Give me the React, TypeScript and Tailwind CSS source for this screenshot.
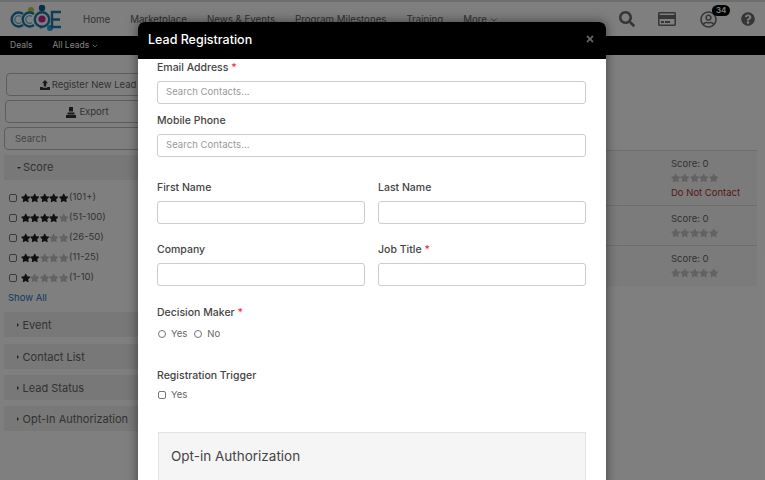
import { FaSearch, FaRegCreditCard, FaRegUserCircle, FaQuestionCircle, FaStar, FaTimes } from "react-icons/fa"
import { ChevronDown } from "lucide-react"

const navItems = ["Home", "Marketplace", "News & Events", "Program Milestones", "Training"]
const scoreRows = [
  { filled: 5, label: "(101+)" },
  { filled: 4, label: "(51-100)" },
  { filled: 3, label: "(26-50)" },
  { filled: 2, label: "(11-25)" },
  { filled: 1, label: "(1-10)" },
]
const filters = ["Event", "Contact List", "Lead Status", "Opt-In Authorization"]

function Stars({ filled }: { filled: number }) {
  return (
    <span className="flex w-[47px] justify-between">
      {[0, 1, 2, 3, 4].map((i) => (
        <FaStar key={i} size={10} className={i < filled ? "text-[#222]" : "text-[#c4c4c4]"} />
      ))}
    </span>
  )
}

function Logo() {
  return (
    <svg width="54" height="34" viewBox="0 0 54 34" fill="none">
      <circle cx="21" cy="8" r="3" fill="#c9c63a" />
      <circle cx="32" cy="6" r="3.2" fill="#0f5f8c" />
      <circle cx="32" cy="17" r="3.6" fill="#c2278f" />
      <circle cx="31" cy="25" r="1.5" fill="#8a6a3a" />
      <circle cx="40" cy="26" r="3" fill="#2aa3d6" />
      <path d="M13 12a7 7 0 1 0 0 11" stroke="#1b7fa8" strokeWidth="2.4" />
      <path d="M11 14.500a3.800 3.800 0 1 0 0 6" stroke="#56b7dc" strokeWidth="1.200" />
      <path d="M24 12a7 7 0 1 0 0 11" stroke="#1b7fa8" strokeWidth="2.400" />
      <path d="M22 14.500a3.800 3.800 0 1 0 0 6" stroke="#56b7dc" strokeWidth="1.200" />
      <circle cx="32" cy="17.500" r="7.200" stroke="#1b7fa8" strokeWidth="2.400" />
      <path d="M51 10H42V25H51M42 17.500H50" stroke="#1b7fa8" strokeWidth="2.400" />
    </svg>
  )
}

function UploadIcon() {
  return (
    <svg width="10" height="10" viewBox="0 0 10 10" fill="#333" className="mr-[2px]">
      <path d="M5 0 8 3.200H6.200V6.400H3.800V3.200H2Z" />
      <path d="M0 7H2.800V7.800H7.200V7H10V10H0Z" />
    </svg>
  )
}

function ExportIcon() {
  return (
    <svg width="10" height="11" viewBox="0 0 10 11" fill="#333" className="mr-[3px]">
      <path d="M3 0H7V4.500H3Z" />
      <path d="M1.500 5.500H8.500V7.500H1.500Z" />
      <path d="M0 8H10V11H0Z" />
    </svg>
  )
}

function Caret({ open }: { open?: boolean }) {
  return open ? (
    <span className="mr-[2px] h-0 w-0 border-x-[2px] border-t-[2.5px] border-x-transparent border-t-[#444]" />
  ) : (
    <span className="mr-[3.500px] h-0 w-0 border-y-[2px] border-l-[2.5px] border-y-transparent border-l-[#444]" />
  )
}

function LeadScore({ dnc }: { dnc?: boolean }) {
  return (
    <>
      <div className="leading-[14px]">Score: 0</div>
      <div className="mt-[2px]">
        <Stars filled={0} />
      </div>
      {dnc && <div className="mt-[3px] leading-[14px] text-[#a33]">Do Not Contact</div>}
    </>
  )
}

function Background() {
  return (
    <div className="flex h-full flex-col bg-white text-[#666]">
      {/* Top nav */}
      <div className="flex h-9 items-center border-t-2 border-[#ddd] pl-2.5">
        <Logo />
        <div className="ml-[19px] mt-0.5 flex gap-[20px] text-[9.700px]">
          {navItems.map((n) => (
            <span key={n}>{n}</span>
          ))}
          <span className="flex items-center gap-0.5">
            More <ChevronDown size={10} />
          </span>
        </div>
        <div className="ml-auto flex items-center text-[#6c6c6c]">
          <FaSearch size={16} className="mr-[23px]" />
          <FaRegCreditCard size={18} className="mr-[24px]" />
          <span className="relative mr-[24px]">
            <FaRegUserCircle size={17} />
            <span className="absolute -top-[6px] left-[12px] rounded-full bg-black px-1 text-[8px] font-semibold leading-[11px] text-white">
              34
            </span>
          </span>
          <FaQuestionCircle size={14} className="mr-[10px]" />
        </div>
      </div>

      {/* Sub nav */}
      <div className="flex h-[19px] items-center gap-[20px] bg-black pl-2.5 text-[8.5px] text-white">
        <span>Deals</span>
        <span className="flex items-center gap-0.5">
          All Leads <ChevronDown size={8} />
        </span>
      </div>

      <div className="flex flex-1">
        {/* Sidebar */}
        <div className="w-[170px] pl-1 pt-[18px] text-[10px]">
          <div className="ml-0.5 flex h-[23px] items-center justify-center rounded border border-[#bbb] pt-px text-[9.500px]">
            <UploadIcon />
            Register New Lead
          </div>
          <div className="ml-px mt-1 flex h-[23px] items-center justify-center rounded border border-[#bbb] pt-0.5 text-[9.500px]">
            <ExportIcon />
            Export
          </div>
          <div className="mt-1 flex h-[23px] items-center rounded border border-[#bbb] pl-2.5 pt-px text-[9.500px] text-[#888]">
            Search
          </div>
          <div className="mt-[5px] flex h-[25px] items-center bg-[#f0f0f0] pl-[13px] text-[11px]">
            <Caret open />
            Score
          </div>
          <div className="mt-[10px] flex flex-col gap-[5px] pl-[5px] text-[9.500px]">
            {scoreRows.map((r) => (
              <div key={r.label} className="flex h-[15px] items-center">
                <span className="mr-[4px] h-[8px] w-[8px] rounded-[2px] border border-[#777] bg-white" />
                <Stars filled={r.filled} />
                <span className="ml-px">{r.label}</span>
              </div>
            ))}
          </div>
          <div className="mt-[6px] pl-1 text-[9.500px] text-[#2a72b5]">Show All</div>
          <div className="mt-[7px] flex flex-col gap-[6px]">
            {filters.map((f) => (
              <div key={f} className="flex h-[25px] items-center bg-[#f0f0f0] pl-[13px] text-[11px] first:mb-px">
                <Caret />
                {f}
              </div>
            ))}
          </div>
        </div>

        {/* Lead list */}
        <div className="ml-auto mr-2 mt-[95px] h-[136px] w-[300px] bg-[#f7f7f7] text-[9.500px]">
          <div className="h-[55px] border-t border-[#ddd] pl-[214px] pt-[6px]">
            <LeadScore dnc />
          </div>
          <div className="h-[40px] border-t border-[#ddd] pl-[214px] pt-[6px]">
            <LeadScore />
          </div>
          <div className="h-[40px] border-t border-[#ddd] pl-[214px] pt-[6px]">
            <LeadScore />
          </div>
        </div>
      </div>
    </div>
  )
}

function Field({ label, required, placeholder }: { label: string; required?: boolean; placeholder?: string }) {
  return (
    <div>
      <label className="block text-[10.500px] font-medium leading-[14px] text-[#444]">
        {label} {required && <span className="text-red-500">*</span>}
      </label>
      <div className="mt-[6px] flex h-[23px] items-center rounded-[3px] border border-[#ccc] pl-2 text-[9.500px] tracking-[0.05px] text-[#999]">
        {placeholder}
      </div>
    </div>
  )
}

function Modal() {
  return (
    <div className="absolute left-[138px] top-[22px] h-[470px] w-[468px] overflow-hidden rounded-t-md bg-white shadow-[0_0_12px_rgba(0,0,0,0.5)]">
      <div className="flex h-[37px] items-center justify-between bg-black pl-[10px] pr-[11px] text-white">
        <span className="text-[12.500px] font-medium">Lead Registration</span>
        <FaTimes size={10} className="-mt-1 text-[#666]" />
      </div>
      <div className="pl-[19px] pr-[20px] pt-[2px]">
        <Field label="Email Address" required placeholder="Search Contacts..." />
        <div className="mt-[10px]">
          <Field label="Mobile Phone" placeholder="Search Contacts..." />
        </div>
        <div className="mt-[24px] grid grid-cols-2 gap-x-[13px] gap-y-[19px]">
          <Field label="First Name" />
          <Field label="Last Name" />
          <Field label="Company" />
          <Field label="Job Title" required />
        </div>
        <div className="mt-[20px] text-[10.500px] font-medium leading-[14px] text-[#444]">
          Decision Maker <span className="text-red-500">*</span>
        </div>
        <div className="mt-[7px] flex items-center pl-px text-[9.500px] leading-[14px] text-[#666]">
          <span className="h-2 w-2 rounded-full border border-[#777]" />
          <span className="ml-[5px]">Yes</span>
          <span className="ml-[7px] h-2 w-2 rounded-full border border-[#777]" />
          <span className="ml-[5px]">No</span>
        </div>
        <div className="mt-[28px] text-[10.500px] font-medium leading-[14px] text-[#444]">Registration Trigger</div>
        <div className="mt-[5px] flex items-center pl-px text-[9.500px] leading-[14px] text-[#666]">
          <span className="h-2 w-2 rounded-[2px] border border-[#777]" />
          <span className="ml-[5px]">Yes</span>
        </div>
        <div className="mt-[30px] ml-px h-[60px] border border-[#e3e3e3] bg-[#f5f5f5] pl-[12px] pt-[13px] text-[13.500px] text-[#444]">
          Opt-in Authorization
        </div>
      </div>
    </div>
  )
}

export default function App() {
  return (
    <div className="relative h-[480px] w-[765px] overflow-hidden font-['Inter','Liberation_Sans',sans-serif]">
      <Background />
      <div className="absolute inset-0 bg-black/50" />
      <Modal />
    </div>
  )
}
